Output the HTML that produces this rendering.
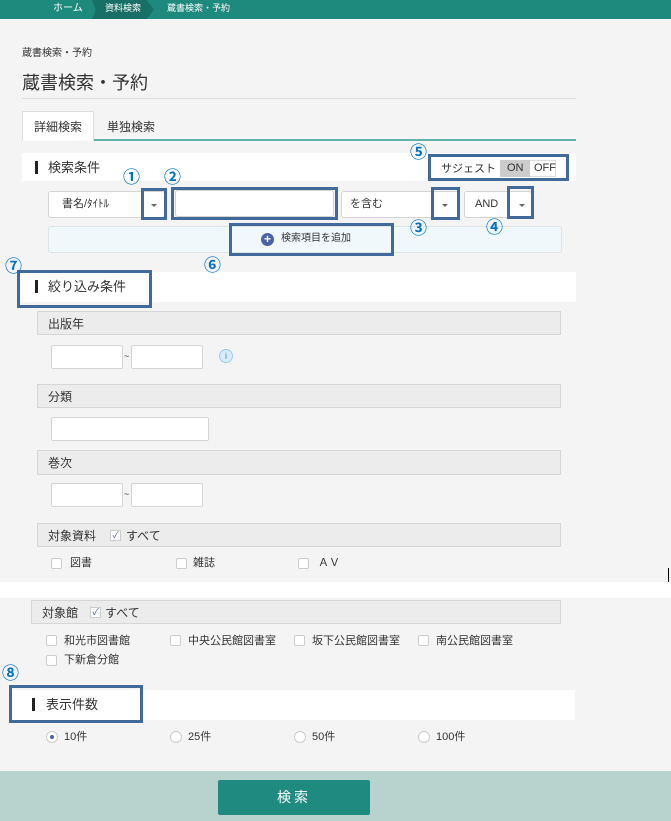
<!DOCTYPE html>
<html><head><meta charset="utf-8"><style>
*{box-sizing:border-box;margin:0;padding:0}
body{width:671px;height:821px;background:#f4f4f4;position:relative;overflow:hidden;font-family:"Liberation Sans","Noto Sans CJK JP",sans-serif;color:#333}
.a{position:absolute}
.t{position:absolute;white-space:nowrap;line-height:1}
.wb{position:absolute;background:#fff}
.bx{position:absolute;border:3px solid #41699a;z-index:5}
.hd{position:absolute;background:#ececec;border:1px solid #d6d6d6;font-size:12px;padding-left:10px;display:flex;align-items:center}
.in{position:absolute;background:#fff;border:1px solid #d4d4d4;border-radius:3px}
.cb{position:absolute;width:11px;height:11px;background:#fff;border:1px solid #ccc;border-radius:2px}
.rd{position:absolute;width:12px;height:12px;background:#fff;border:1px solid #ccc;border-radius:50%}
.n{position:absolute;color:#0070c0;font-size:17px;font-weight:bold;line-height:1;z-index:10;font-family:"Noto Sans CJK JP",sans-serif}
.bar{position:absolute;width:3px;height:13px;background:#222}
.car{position:absolute;width:0;height:0;border-left:3px solid transparent;border-right:3px solid transparent;border-top:3px solid #666}
.s{font-size:11px}
</style></head><body>
<div class="a" style="left:0;top:0;width:671px;height:19px;background:#1e8a7e"></div>
<div class="a" style="left:92px;top:0;width:62px;height:19px;background:#186f66;clip-path:polygon(0 0,88% 0,100% 50%,88% 100%,0 100%,6% 50%)"></div>
<div class="t" style="left:53px;top:4px;font-size:10px;color:#fff">ホーム</div>
<div class="t" style="left:105px;top:4px;font-size:9px;color:#fff">資料検索</div>
<div class="t" style="left:167px;top:4px;font-size:9px;color:#fff">蔵書検索・予約</div>

<div class="t" style="left:22px;top:49px;font-size:10px;color:#333">蔵書検索・予約</div>
<div class="t" style="left:22px;top:74px;font-size:18px;color:#333">蔵書検索・予約</div>
<div class="a" style="left:22px;top:98px;width:554px;height:1px;background:#ddd"></div>
<div class="a" style="left:22px;top:111px;width:72px;height:30px;background:#fff;border:1px solid #ddd;border-bottom:none"></div>
<div class="t" style="left:34px;top:121px;font-size:12px">詳細検索</div>
<div class="t" style="left:107px;top:121px;font-size:12px">単独検索</div>
<div class="a" style="left:94px;top:139px;width:482px;height:2px;background:#5fb3a8"></div>

<div class="wb" style="left:22px;top:153px;width:554px;height:28px"></div>
<div class="bar" style="left:35px;top:161px"></div>
<div class="t" style="left:48px;top:161px;font-size:13px">検索条件</div>
<div class="t" style="left:441px;top:164px;font-size:11px">サジェスト</div>
<div class="a" style="left:500px;top:160px;width:56px;height:17px;border:1px solid #ddd;background:#fff"></div>
<div class="a" style="left:500px;top:160px;width:30px;height:17px;background:#ccc"></div>
<div class="t" style="left:507px;top:163px;font-size:11px">ON</div>
<div class="t" style="left:534px;top:163px;font-size:11px">OFF</div>
<div class="bx" style="left:428px;top:154px;width:141px;height:27px"></div>
<div class="n" style="left:410px;top:142px">⑤</div>

<div class="in" style="left:48px;top:191px;width:117px;height:27px"></div>
<div class="t s" style="left:62px;top:199px">書名/ﾀｲﾄﾙ</div>
<div class="car" style="left:151px;top:204px"></div>
<div class="bx" style="left:141px;top:188px;width:26px;height:32px"></div>
<div class="n" style="left:123px;top:167px">①</div>
<div class="in" style="left:175px;top:190px;width:159px;height:27px"></div>
<div class="bx" style="left:171px;top:187px;width:167px;height:33px"></div>
<div class="n" style="left:164px;top:167px">②</div>
<div class="in" style="left:341px;top:191px;width:119px;height:27px"></div>
<div class="t s" style="left:350px;top:199px">を含む</div>
<div class="car" style="left:442px;top:204px"></div>
<div class="bx" style="left:431px;top:187px;width:29px;height:33px"></div>
<div class="n" style="left:410px;top:218px">③</div>
<div class="in" style="left:464px;top:191px;width:68px;height:27px"></div>
<div class="t s" style="left:475px;top:199px">AND</div>
<div class="car" style="left:519px;top:204px"></div>
<div class="bx" style="left:507px;top:186px;width:27px;height:33px"></div>
<div class="n" style="left:486px;top:217px">④</div>

<div class="a" style="left:48px;top:226px;width:514px;height:27px;background:#f0f8fc;border:1px solid #dde4e8;border-radius:3px"></div>
<div class="a" style="left:261px;top:233px;width:13px;height:13px;border-radius:50%;background:#4a63a8;color:#fff;font-size:12px;font-weight:bold;line-height:13px;text-align:center">+</div>
<div class="t" style="left:281px;top:234px;font-size:10px">検索項目を追加</div>
<div class="bx" style="left:229px;top:223px;width:165px;height:33px"></div>
<div class="n" style="left:204px;top:255px">⑥</div>

<div class="wb" style="left:18px;top:272px;width:558px;height:30px"></div>
<div class="bar" style="left:35px;top:280px"></div>
<div class="t" style="left:48px;top:280px;font-size:13px">絞り込み条件</div>
<div class="bx" style="left:17px;top:270px;width:135px;height:38px"></div>
<div class="n" style="left:5px;top:256px">⑦</div>

<div class="hd" style="left:37px;top:311px;width:524px;height:24px">出版年</div>
<div class="in" style="left:51px;top:345px;width:72px;height:24px;border-radius:2px"></div>
<div class="t" style="left:124px;top:352px;font-size:9px">~</div>
<div class="in" style="left:131px;top:345px;width:72px;height:24px;border-radius:2px"></div>
<div class="a" style="left:219px;top:349px;width:14px;height:14px;border-radius:50%;background:#d8ecfb;border:1px solid #9cc9ef;color:#3b8fd9;font-size:9px;line-height:12px;text-align:center">i</div>
<div class="hd" style="left:37px;top:384px;width:524px;height:24px">分類</div>
<div class="in" style="left:51px;top:417px;width:158px;height:24px;border-radius:2px"></div>
<div class="hd" style="left:37px;top:450px;width:524px;height:25px">巻次</div>
<div class="in" style="left:51px;top:483px;width:72px;height:24px;border-radius:2px"></div>
<div class="t" style="left:124px;top:490px;font-size:9px">~</div>
<div class="in" style="left:131px;top:483px;width:72px;height:24px;border-radius:2px"></div>
<div class="hd" style="left:37px;top:523px;width:524px;height:24px">対象資料
<span style="display:inline-block;width:11px;height:11px;border:1px solid #ccc;background:#fff;margin-left:14px;margin-right:5px;color:#4a63a8;font-size:9px;line-height:9px;text-align:center">✓</span>すべて</div>
<div class="cb" style="left:51px;top:558px"></div><div class="t s" style="left:70px;top:558px">図書</div>
<div class="cb" style="left:176px;top:558px"></div><div class="t s" style="left:193px;top:558px">雑誌</div>
<div class="cb" style="left:298px;top:558px"></div><div class="t s" style="left:318px;top:558px">ＡＶ</div>

<div class="wb" style="left:0;top:582px;width:671px;height:16px"></div>
<div class="a" style="left:668px;top:568px;width:1px;height:14px;background:#000"></div>

<div class="hd" style="left:31px;top:600px;width:530px;height:24px">対象館
<span style="display:inline-block;width:11px;height:11px;border:1px solid #ccc;background:#fff;margin-left:12px;margin-right:4px;color:#4a63a8;font-size:9px;line-height:9px;text-align:center">✓</span>すべて</div>
<div class="cb" style="left:46px;top:635px"></div><div class="t s" style="left:64px;top:636px">和光市図書館</div>
<div class="cb" style="left:170px;top:635px"></div><div class="t s" style="left:188px;top:636px">中央公民館図書室</div>
<div class="cb" style="left:294px;top:635px"></div><div class="t s" style="left:312px;top:636px">坂下公民館図書室</div>
<div class="cb" style="left:418px;top:635px"></div><div class="t s" style="left:436px;top:636px">南公民館図書室</div>
<div class="cb" style="left:46px;top:655px"></div><div class="t s" style="left:64px;top:655px">下新倉分館</div>
<div class="n" style="left:2px;top:663px">⑧</div>

<div class="wb" style="left:10px;top:690px;width:565px;height:30px"></div>
<div class="bar" style="left:32px;top:698px"></div>
<div class="t" style="left:46px;top:698px;font-size:13px">表示件数</div>
<div class="bx" style="left:9px;top:685px;width:134px;height:38px"></div>
<div class="rd" style="left:46px;top:731px"></div><div class="a" style="left:50px;top:735px;width:4px;height:4px;border-radius:50%;background:#4a63a8"></div>
<div class="t s" style="left:64px;top:732px">10件</div>
<div class="rd" style="left:170px;top:731px"></div><div class="t s" style="left:188px;top:732px">25件</div>
<div class="rd" style="left:294px;top:731px"></div><div class="t s" style="left:312px;top:732px">50件</div>
<div class="rd" style="left:418px;top:731px"></div><div class="t s" style="left:436px;top:732px">100件</div>

<div class="a" style="left:0;top:771px;width:671px;height:50px;background:#b8d2cd"></div>
<div class="a" style="left:218px;top:780px;width:152px;height:35px;background:#1f8a80;border-radius:2px;color:#fff;font-size:14px;text-align:center;line-height:35px;letter-spacing:3px">検索</div>
</body></html>
